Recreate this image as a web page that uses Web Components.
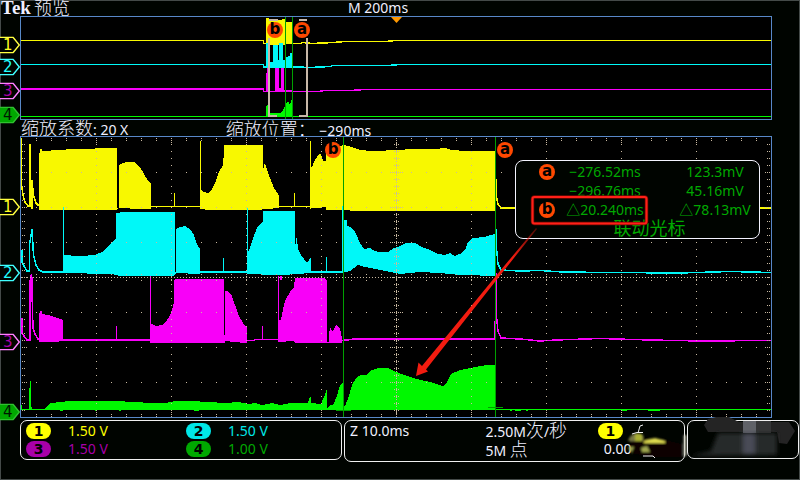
<!DOCTYPE html>
<html lang="zh-CN">
<head>
<meta charset="utf-8">
<title>Tek 预览</title>
<style>
html,body{margin:0;background:#000400}
</style>
</head>
<body>
<scope-screen></scope-screen>
<script>
const define=(name,html,init)=>customElements.define(name,class extends HTMLElement{
  constructor(){super();this.attachShadow({mode:'open'}).innerHTML=html;}
  connectedCallback(){if(init)init.call(this,this.shadowRoot);}
});
const num=(el,n)=>parseFloat(el.getAttribute(n));

/* round cursor badge */
define('cursor-mark',`<style>
:host{display:inline-flex;width:16px;height:16px;border-radius:50%;background:#ff4800;color:#000;align-items:center;justify-content:center;font:bold 15px/16px "DejaVu Sans",sans-serif}
span{display:block;height:18px}
</style><span><slot></slot></span>`);

/* channel flag beside a plot */
define('channel-tag',`<style>
:host{display:grid;width:20px;height:17px;font:15px/17px "DejaVu Sans",sans-serif;color:var(--ink)}
svg,span{grid-area:1/1}
span{padding-left:3px}
</style><svg width="20" height="17" viewBox="0 0 20 17" aria-hidden="true"><path d="M0 .8H13L19.3 8.5L13 16.2H0" fill="var(--fill,#000400)" stroke="var(--edge)" stroke-width="1.4"/></svg><span><slot></slot></span>`);

/* channel number in an oval */
define('channel-pill',`<style>
:host{display:inline-block;width:25px;height:16px;border-radius:8px;background:var(--fill);color:#000;text-align:center;font:bold 14px/16px "DejaVu Sans",sans-serif}
</style><slot></slot>`);

define('channel-scale',`<style>
:host{display:flex;align-items:center;gap:17px;height:18px;color:var(--fill)}
</style><channel-pill><slot name="n"></slot></channel-pill><span><slot></slot></span>`);

define('status-panel',`<style>
:host{display:block;position:relative;box-sizing:border-box;min-height:39px;border:1px solid #f0f0f0;border-radius:7px;padding:1px 5px}
</style><slot></slot>`);

/* measured values at both cursors */
define('cursor-readout',`<style>
:host{display:block;box-sizing:border-box;width:245px;border:1px solid #f4f4ff;border-radius:8px;background:#000400;color:#00a800;padding:1px 0 0}
table{width:100%;table-layout:fixed;border-collapse:collapse}
td,th{height:19px;padding:0;text-align:center;font-weight:inherit;line-height:19px;white-space:nowrap}
cursor-mark{vertical-align:middle}
col.m{width:49px} col.t{width:80px}
th{padding-left:13px;line-height:0} td:last-child{padding-left:26px}
tfoot td:last-child{padding-left:24px;font-size:18px}
</style><table><colgroup><col class="m"><col class="t"><col></colgroup>
<tbody>
<tr><th scope="row"><cursor-mark>a</cursor-mark></th><td>−276.52ms</td><td>123.3mV</td></tr>
<tr><th></th><td>−296.76ms</td><td>45.16mV</td></tr>
<tr><th scope="row"><cursor-mark>b</cursor-mark></th><td>△20.240ms</td><td>△78.13mV</td></tr>
</tbody><tfoot><tr><td colspan="3">联动光标</td></tr></tfoot></table>`);

/* plot frame: slotted items with x / y attributes are pinned on its canvas */
const frame=(vb,art,over='')=>`<style>
:host{display:block;position:relative}
svg{display:block;width:100%;height:auto}
svg.over{position:absolute;inset:0;pointer-events:none}
.l{fill:none;stroke-width:1.5}
::slotted(*){position:absolute}
::slotted(channel-tag){transform:translate(-100%,-50%)}
::slotted(cursor-mark){transform:translate(-50%,-50%)}
</style><svg viewBox="${vb}" aria-hidden="true">${art}</svg><slot></slot>${over}`;
function pin(root){
  const [x0,y0,w,h]=root.querySelector('svg').getAttribute('viewBox').split(' ').map(Number);
  for(const c of this.children){
    c.style.left=(num(c,'x')-x0)/w*100+'%';
    c.style.top=(num(c,'y')-y0)/h*100+'%';
  }
}

define('overview-plot',frame('20 16 752 104',`
<rect x="20.5" y="16.5" width="751" height="103" fill="#000" stroke="#5888c8" shape-rendering="crispEdges"/>
<g shape-rendering="crispEdges">
<g stroke="#f8f800" fill="#f8f800"><path class="l" stroke-width="1" d="M21 40.5H263.5V43.5H300L303 42.5L312 43.5L333 42.5L345 41.5H386L395 40.5H771"/><path stroke="none" d="M266 20V18H269V20H282V19H285V44H292V22H286V44.5H266Z"/></g>
<g stroke="#00f8f8" fill="#00f8f8"><path class="l" d="M21 64.5H263.5V67H297L310 67.5L330 66.5L333 65.5H388L400 64.5H771"/><path stroke="none" d="M266 43H270V62H273V45H278V60H279V43H283V60H286V57H288V56H290V53H292V67.5H266Z"/></g>
<g stroke="#f800f8" fill="#f800f8"><path class="l" style="stroke-width:2" d="M21 89H263.5"/><path class="l" d="M263.5 89V91.5H318L325 90.5H350L365 89.5H771"/><path stroke="none" d="M266 73H267V68H268V92H275V68H279V88H281V68H284V90H293V92H266Z"/></g>
<g fill="#00f800"><rect x="21" y="116" width="750" height="1"/><path d="M266 107L267 105H268V113H280L283 110L285 106H286V103L288 101L290 105L292 99V116H266Z"/></g>
<path d="M285.5 17V119M292.5 17V119" stroke="#00a000"/>
<path d="M278 20H269M269 38V116H277M299 20H307M307 38V116H299" fill="none" stroke="#c8b8a8" stroke-width="2"/>
</g>
<path d="M391 17H402L396.5 23Z" fill="#ff9800"/>`),pin);

const grid=()=>{
  let d='';const p=(x,y)=>d+=`M${x} ${y}h1v1h-1z`;
  for(let x=36;x<771;x+=15){
    const major=(x-96)%75===0;
    for(let y=172;y<417;y+=35)if(y!==277)p(x,y);
    for(const k of [0,2].concat(major?[4,6]:[])){p(x,138+k);p(x,416-k);}
    for(let k=-3;k<=3;k+=major?1.5:3)p(x,277+Math.round(k));
    if(major)for(let y=144;y<417;y+=7)p(x,y);
  }
  for(let x=21;x<771;x+=3)p(x,277);
  for(let y=138;y<417;y+=2.334)p(396,Math.round(y));
  for(let y=144;y<417;y+=7){
    const m=(y-172)%35===0;
    for(const k of m?[0,2,4]:[0,2]){p(22+k,y);p(769-k,y);}
    for(let k=2;k<=(m?6:3);k+=2){p(396+k,y);p(396-k,y);}
  }
  return d;
};

define('main-plot',frame('20 136 752 282',`
<rect x="20.5" y="136.5" width="751" height="281" fill="#000" stroke="#5888c8" shape-rendering="crispEdges"/>
<g shape-rendering="crispEdges">
<g stroke="#f8f800" fill="#f8f800">
<path class="l" d="M21.5 138V184L23 195L25 202L28 206H30V144V206H32V209V180L33.5 195L36 203L39 206"/>
<path class="l" d="M151 206.5H311M174.5 193V207M200.5 141V209M294.5 193V207M310.5 141V209M496.5 179V197L498 204L501 208H771"/>
<path stroke="none" d="M39 209.5V158L40 149H42V151L60 150L66 149.5L95 148.5L110 148H117V208H118.5V165L121 164L125 162.5L131 162L135 162.5L140 167L144 174L148 181L151 183V208.5L140 209L119 208L117 209.5Z"/>
<path stroke="none" d="M200 209V190H202L203 192L208 193L212 189L215 183L219 172L223 165V158L224 157V145L229 145.5L262.5 145V168H264V163L266 166L270 178L274 188L279 195.5V208L262 209.5L210 210Z"/>
<path stroke="none" d="M310 208V167H312L315 160L319 154H321L323 161H326V150L344 145L348 146L360 150L371 151L400 150L410 149L435 149L445 148L452 150L465 151L495 151.5V210.5H350L326 210V207L318 208Z"/>
</g>
<g stroke="#00f8f8" fill="#00f8f8">
<path class="l" d="M22 250V262L24 266L27 271H29.5V245L31 236L32 229L33.5 255L36 265L39 270L43 272H63M63.5 207V272M200 272H248M223.5 258V272M247.5 208V274M311 272H343M326.5 257V272M342.5 206V273M496.5 229V248L498 264L501 270L520 271L540 270.5L562 272L610 272.5L680 273L730 271.5L771 272.5"/>
<path stroke="none" d="M62.5 273V255L80 256L95 255L102 252L108 247L113 241L116 239V213L120 212.5L175 212V272H176V229L180 227L185 226L190 229L194 235L197 244L200 249V274L176 273L174 275.5H118L112 274Z"/>
<path stroke="none" d="M247 274V255L250 248L253 238L257 228L263 221V211H295V251L296 238H297L298 249L301 255L307 263L309 260L311 257V273L290 274.5H262Z"/>
<path stroke="none" d="M344 220H347V226L350 227L354 230L357 236L360 243L364 249L370 248L373 250L378 252L388 252L394 248L400 246L406 243H415L422 247L430 250L438 254L445 255L450 253L455 256L462 253L466 248L468 242L472 238L485 237L490 235L495 234V275.5H480L460 275L440 273L420 272L400 274L385 271L375 269L365 267L358 265L354 268L350 271L344 272.5Z"/>
</g>
<g stroke="#f800f8" fill="#f800f8">
<path class="l" d="M22 318V333L24 336L27 340H30V281L31.5 274L33 328L35 334L38 339L40 340M63 340H151M116.5 326V340M150.5 276V342M247 340.5H254L255 339.5H280M262.5 326V340M278.5 276V342M281 276V280M342 340.5L352 339.5H494.5V321M496 273V312L498 331L501 338L520 339L540 341L556 340L600 338.5L650 340L700 341L771 340.5"/>
<path d="M352 338.5H494M32.5 277V284M22.5 318V332M63 340.5H150"/>
<path stroke="none" d="M39 342V316L40 311H42V314L48 315L54 317L61 319L63 320V341L55 342Z"/>
<path stroke="none" d="M150 342.5V324H152L156 326L162 325L166 322L170 315L173 307L174 302V280L176 279H224V335H225V291H228L232 296L235 305L239 316L243 323L247 328V342.5H240L225 341V343H174Z"/>
<path stroke="none" d="M278 342V320H281L282 314L285 301L290 292L294 287L295 278H325L327 281V342H329V335L330 328H331L332 331H333L336 325H337L339 328H340L342 339V343H295L294 341Z"/>
</g>
<g fill="#00f800">
<path d="M21 410V405H22V409H29V396L30 381H31V405L32 409H45L48 405L51 403L60 402L70 401H115L135 402L150 403L165 403L175 401L200 401.5L225 403L238 402L248 404L255 403L262 405L272 403L280 405L290 403L308 403L310 397H311V403L321 404L324 397L327 389V408H328L330 405H333L337 396L340 385L343 382V406H345L349 396L352 385L356 378L361 375H366L372 370L378 368H388L394 371L404 375L417 379L430 382L443 386L446 384L451 374L460 370L475 367L490 364.5L495 365V410Z"/>
<path d="M495 409H771V410H495ZM60 410h3v1h-3zM95 410h2v1h-2zM119 410h2v1h-2zM194 410h5v1h-5zM510 410h2v1h-2zM515 410h6v1h-6zM526 410h2v1h-2zM622 410h5v1h-5zM648 410h12v1h-12z"/>
</g>
<path class="grid" fill="#c8b8a0"/>
<path d="M343.5 137V417M495.5 137V417M336 410.5H351M488 407.5H503" stroke="#00a000"/>
</g>`,`
<svg class="over" viewBox="20 136 752 282" aria-hidden="true">
<defs><linearGradient id="f" x1="1" y1="0" x2="0" y2="1"><stop offset="0" stop-color="#f21c10" stop-opacity=".3"/><stop offset=".2" stop-color="#f21c10"/></linearGradient></defs>
<rect x="532.5" y="197" width="114" height="26.5" rx="2" fill="none" stroke="#700800" stroke-width="3.5"/>
<rect x="532.5" y="197" width="114" height="26.5" rx="2" fill="none" stroke="#ff2018" stroke-width="2"/>
<path d="M416 376L418.5 362.5L422 366L500 271L536 228L537 229L502 273L426 369.5L428 371.5Z" fill="url(#f)"/>
</svg>`),function(root){root.querySelector('.grid').setAttribute('d',grid());pin.call(this,root);});

define('scope-screen',`<style>
:host{display:grid;grid-template-columns:20px minmax(0,1fr) 28px;grid-template-rows:16px auto 16px auto 41px 1fr;box-sizing:border-box;min-height:100vh;background:#000400;color:#f0f0ff;font:14px/16px "Noto Sans","Noto Sans CJK SC",sans-serif;box-shadow:inset 0 0 0 1px #444a48;white-space:nowrap}
header{grid-column:1/-1;display:grid;grid-template-columns:348fr 452fr}
.brand{display:flex;gap:3px;padding-left:1px}
b{font:bold 19px/16px "Liberation Serif",serif}
.c{font-size:18px;line-height:16px;font-weight:300}
.tc{font-family:"Noto Sans CJK TC",sans-serif}
overview-plot,main-plot{grid-column:2}
.zoom{grid-column:2;display:grid;grid-template-columns:205fr 547fr;padding-left:1px}
footer{grid-column:1/-1;display:grid;grid-template-columns:322fr 341fr 112fr;gap:2px;padding:2px 1px 0 20px;align-items:start}
.scales,.acq,.trig{display:grid;line-height:18px}
.scales{grid-template-columns:160fr 150fr}
.acq{grid-template-columns:135fr 112fr 81fr}
.off{padding-left:6px}
.y{--edge:#ffff40;--ink:#ffff20;--fill:#ffff00}
.b{--edge:#40ffff;--ink:#20ffff;--fill:#00e8e8}
.m{--edge:#ff80ff;--ink:#a800a8;--fill:#a800a8}
.g{--edge:#30c030;--ink:#001800;--fill:#00a800}
channel-tag:not(.g){--fill:#000400}
.smear{position:absolute;pointer-events:none}
.s1{right:-5px;top:2px} .s2{right:3px;top:-6px}
</style>
<header><div class="brand"><b>Tek</b><span class="c">预览</span></div><span>M 200ms</span></header>
<overview-plot>
<channel-tag class="y" x="20" y="44.5">1</channel-tag><channel-tag class="b" x="20" y="66.5">2</channel-tag><channel-tag class="m" x="20" y="90.5">3</channel-tag><channel-tag class="g" x="20" y="114.5">4</channel-tag>
<cursor-mark x="275" y="30">b</cursor-mark><cursor-mark x="302" y="30">a</cursor-mark>
</overview-plot>
<div class="zoom"><span><span class="c">缩放系数</span>: 20 X</span><span><span class="c">缩放位置<span class="tc">：</span></span> −290ms</span></div>
<main-plot>
<channel-tag class="y" x="20" y="206.5">1</channel-tag><channel-tag class="b" x="20" y="272.5">2</channel-tag><channel-tag class="m" x="20" y="341.5">3</channel-tag><channel-tag class="g" x="20" y="411.5">4</channel-tag>
<cursor-mark x="333" y="150">b</cursor-mark><cursor-mark x="505" y="150">a</cursor-mark>
<cursor-readout x="515" y="160"></cursor-readout>
</main-plot>
<footer>
<status-panel><div class="scales">
<channel-scale class="y"><span slot="n">1</span>1.50 V</channel-scale><channel-scale class="b"><span slot="n">2</span>1.50 V</channel-scale>
<channel-scale class="m"><span slot="n">3</span>1.50 V</channel-scale><channel-scale class="g"><span slot="n">4</span>1.00 V</channel-scale></div></status-panel>
<status-panel><div class="acq"><span>Z 10.0ms</span><div>2.50M<span class="c">次</span>/<span class="c">秒</span><br>5M <span class="c">点</span></div><div><channel-pill class="y">1</channel-pill><div class="off">0.00</div></div></div>
<svg class="smear s1" width="64" height="36" viewBox="624 422 64 36" aria-hidden="true"><defs><filter id="q"><feGaussianBlur stdDeviation="1"/></filter></defs>
<path d="M637 432L639 425L642 424" fill="none" stroke="#f0f0f0"/>
<g filter="url(#q)"><path d="M629 441L630 434L638 432L645 437L662 438L681 443V456H651L632 453Z" fill="#080604"/><path d="M627 440Q629 433 636 432L642 434V440Z" fill="#777744"/><path d="M634 433H641V440H634Z" fill="#aab030"/><path d="M643 440L654 437L664 440V442H643Z" fill="#e0dc50"/><path d="M627 446H633L630 452ZM640 447L646 445L649 451H641Z" fill="#a0a850"/><path d="M684 434V455" stroke="#c8c8b8" stroke-width="2.5"/></g>
<path d="M631 433L636 431.5H642M642 455H652L654 457" fill="none" stroke="#f0f0f0"/></svg></status-panel>
<status-panel><svg class="smear s2" width="108" height="46" viewBox="688 414 108 46" aria-hidden="true"><defs><filter id="r"><feGaussianBlur stdDeviation="2"/></filter></defs>
<path d="M709 418L717 416H730L740 421H790L796 430L788 443L780 442L778 431H709L705 424Z" fill="#242424"/><path d="M744 420H757V432H744Z" fill="#606268"/><path d="M757 420H772V432H757Z" fill="#343536"/>
<g filter="url(#r)"><path d="M719 432H778V454L691 455L712 450Z" fill="#28292a"/><path d="M744 432H756V453H744Z" fill="#484c56"/></g></svg></status-panel>
</footer>`);
</script>
</body>
</html>
